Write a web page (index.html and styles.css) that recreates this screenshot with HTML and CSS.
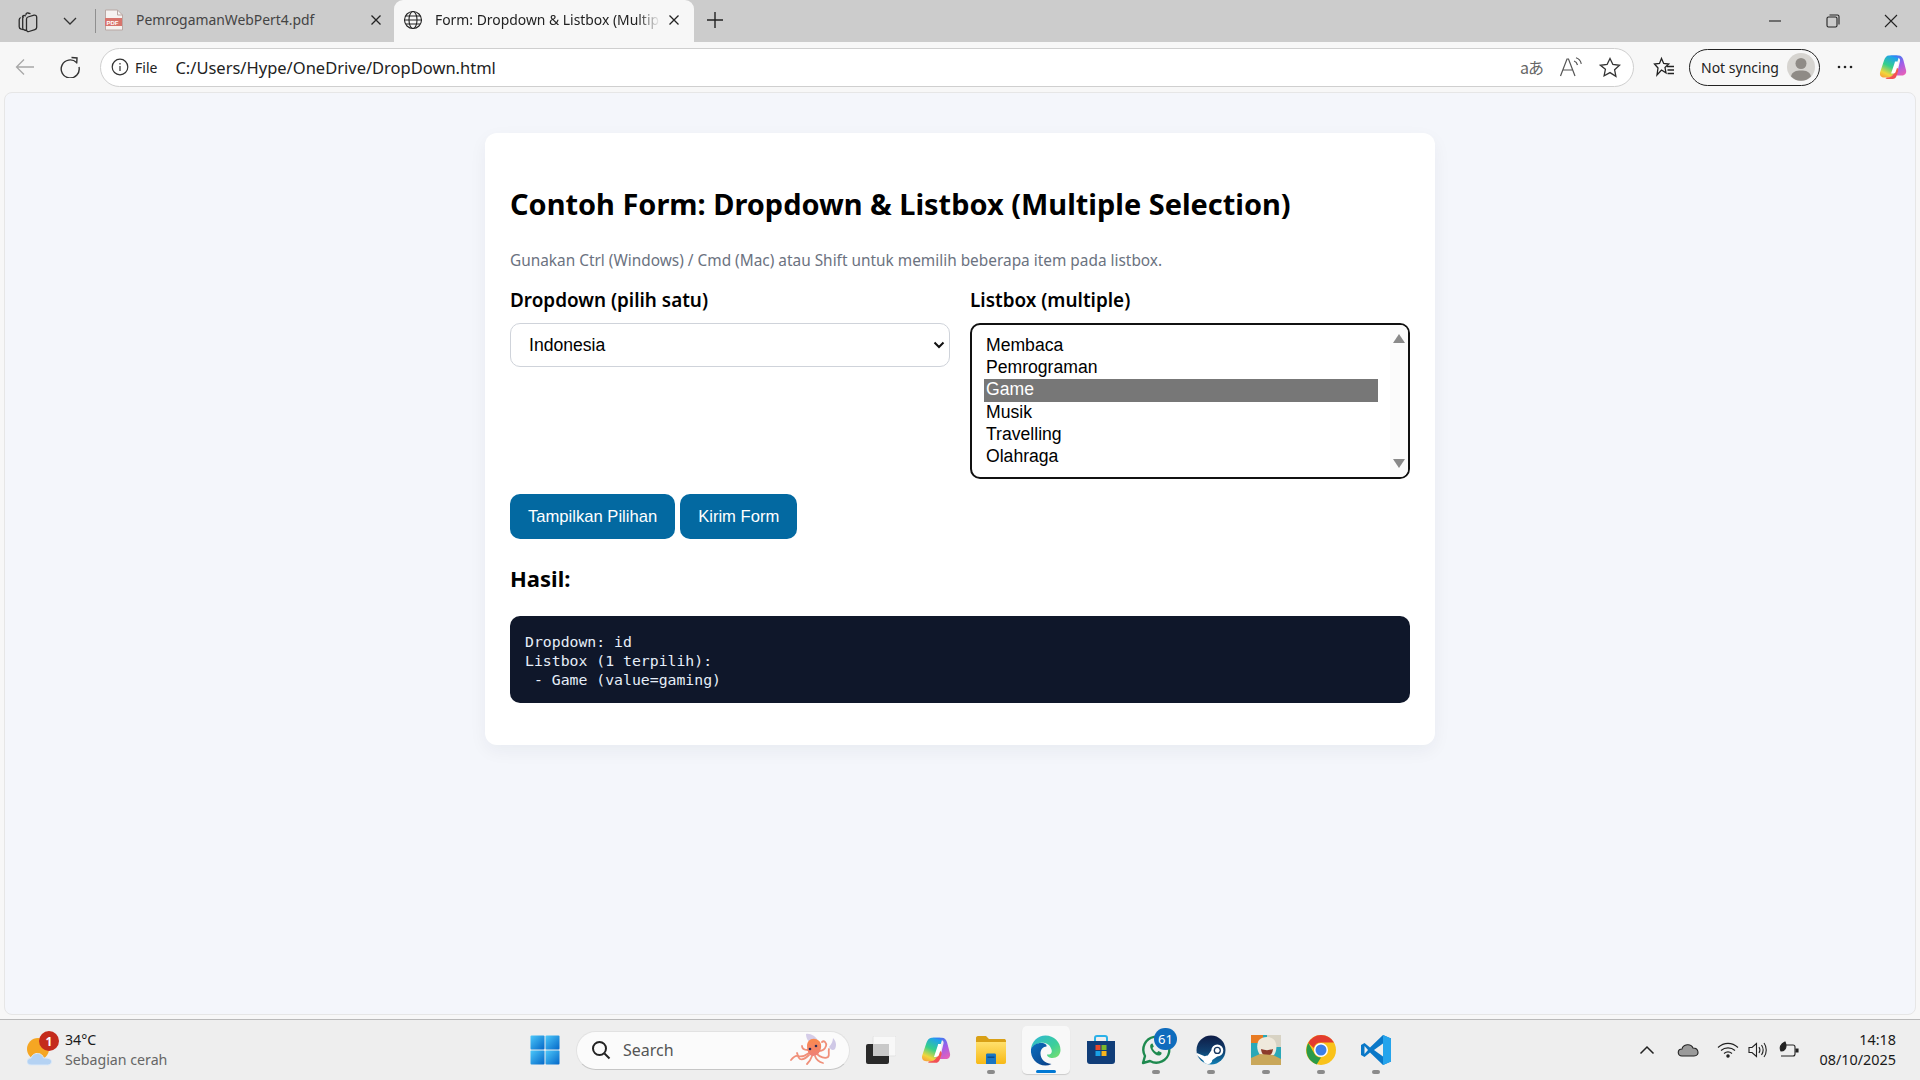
FILE: index.html
```html
<!DOCTYPE html>
<html lang="id">
<head>
<meta charset="utf-8"/>
<title>Form: Dropdown &amp; Listbox (Multiple Selection)</title>
<link rel="stylesheet" href="styles.css">
</head>
<body>
<svg class="defs" width="0" height="0">
    <defs>
        <linearGradient id="copA" x1="0.6" y1="0" x2="0.2" y2="1"><stop offset="0" stop-color="#1f9ff0"/><stop offset=".45" stop-color="#35d08a"/><stop offset=".8" stop-color="#f2d63c"/><stop offset="1" stop-color="#f8a53a"/></linearGradient>
        <linearGradient id="copB" x1="0.3" y1="0" x2="0.8" y2="1"><stop offset="0" stop-color="#2f7ff2"/><stop offset=".5" stop-color="#a05ee8"/><stop offset="1" stop-color="#e860b8"/></linearGradient>
        <linearGradient id="copC" x1="0" y1="0" x2="1" y2="1"><stop offset="0" stop-color="#fb7a3c"/><stop offset="1" stop-color="#ee3f5c"/></linearGradient>
        <linearGradient id="edgeA" x1="0" y1="0" x2="1" y2="1"><stop offset="0" stop-color="#2fb6d8"/><stop offset=".6" stop-color="#3ccf9a"/><stop offset="1" stop-color="#7fe06a"/></linearGradient>
        <linearGradient id="edgeB" x1="0" y1="0" x2="1" y2="1"><stop offset="0" stop-color="#0c6fc0"/><stop offset="1" stop-color="#0b3f86"/></linearGradient>
        <linearGradient id="winA" x1="0" y1="0" x2="1" y2="1"><stop offset="0" stop-color="#4cc8fa"/><stop offset="1" stop-color="#0467c8"/></linearGradient>
        <linearGradient id="steamA" x1="0" y1="0" x2="0" y2="1"><stop offset="0" stop-color="#0f1c46"/><stop offset=".55" stop-color="#10406f"/><stop offset="1" stop-color="#0f7fb4"/></linearGradient>
        <linearGradient id="folderA" x1="0" y1="0" x2="0" y2="1"><stop offset="0" stop-color="#ffe06d"/><stop offset="1" stop-color="#f7b916"/></linearGradient>
        <linearGradient id="octoA" x1="0" y1="0" x2="0" y2="1"><stop offset="0" stop-color="#fb8a4c"/><stop offset="1" stop-color="#ee7f78"/></linearGradient>
        <symbol id="copilot" viewBox="0 0 28 28">
            <path d="M10 2.500h7.500c1.500 0 2.500 1 2 2.500L15 20c-1 3-3.500 4.500-6.500 4.500H5C1.800 24.500.3 22 1.200 19L5 7.500C6 4.500 7.500 2.500 10 2.500z" fill="url(#copA)"/>
            <path d="M10.500 2.500h9c2.500 0 4 1.800 4.800 4.300L27 17c.8 3-1 5.500-4 5.500H17.500L21 8c.5-2-.8-3-2.500-3.500z" fill="url(#copB)"/>
            <path d="M8 24.500c3.500 0 6-1.800 7-5l1.500-4.500c2.200-.6 3.300 1 2.600 3.400L17.500 23c-.6 1.800-2 3-4 3H8.500c-2 0-2.500-1-.5-1.500z" fill="url(#copC)"/>
            <path d="M16 8.500h2.600c.8 2 .4 3.500-.3 5.500l-1.700 5c-.5 1.200-1.300 1.500-3.100 1.500h-1.400l3.500-10.500z" fill="#fff"/>
        </symbol>
    </defs>
</svg>

<div class="tabstrip">
    <div class="strip-tools">
        <svg width="24" height="24" viewBox="0 0 24 24" fill="none" stroke="#2b2b2b" stroke-width="1.300"><path d="M10 6V5.500c0-1 .8-1.700 1.800-1.500l2.700.7"/><path d="M6.500 8.500V8c0-1 .8-1.700 1.800-1.500L10 7"/><path d="M4.700 8.500c-1 .5-1.500 1.200-1.500 2.200v7c0 1.200.7 2 1.800 2.300l2 .6"/><path d="M7.700 7.500c-.7.500-1 1.200-1 2v9.500c0 1 .8 1.800 1.800 2l2 .5"/><path d="M10.500 10c0-1 .6-1.700 1.500-2l6-1.800c1.500-.4 2.700.5 2.700 2v10c0 1.200-.6 2-1.800 2.400l-5.900 1.900c-1.400.4-2.500-.5-2.500-2z"/></svg>
        <svg class="ico-chev" width="16" height="16" viewBox="0 0 16 16" fill="none" stroke="#333" stroke-width="1.300"><path d="M2 5l6 6 6-6"/></svg>
        <span class="strip-sep"></span>
    </div>
    <div class="tab">
        <svg width="20" height="22" viewBox="0 0 20 22"><path d="M1.500 1h12l5 5v15h-17z" fill="#f6f2f0" stroke="#b9a8a4"/><path d="M13.500 1v5h5" fill="none" stroke="#b9a8a4"/><rect x="1" y="9" width="17" height="8" fill="#d8746c"/><text class="pdf-mark" x="2.500" y="15.500">PDF</text></svg>
        <span class="tab-title">PemrogamanWebPert4.pdf</span>
        <svg class="tab-x" width="12" height="12" viewBox="0 0 12 12" stroke="#222" stroke-width="1.300"><path d="M1.500 1.500l9 9M10.500 1.500l-9 9"/></svg>
    </div>
    <div class="tab tab-active">
        <svg width="20" height="20" viewBox="0 0 20 20" fill="none" stroke="#222" stroke-width="1.100"><circle cx="10" cy="10" r="8.500"/><ellipse cx="10" cy="10" rx="4" ry="8.500"/><path d="M1.500 10h17M2.700 6h14.600M2.700 14h14.600"/></svg>
        <span class="tab-title">Form: Dropdown &amp; Listbox (Multiple Selection)</span>
        <svg class="tab-x" width="12" height="12" viewBox="0 0 12 12" stroke="#222" stroke-width="1.300"><path d="M1.500 1.500l9 9M10.500 1.500l-9 9"/></svg>
    </div>
    <svg class="new-tab" width="18" height="18" viewBox="0 0 18 18" stroke="#222" stroke-width="1.400"><path d="M9 1v16M1 9h16"/></svg>
    <div class="win-controls">
        <svg width="14" height="14" viewBox="0 0 14 14" stroke="#222" stroke-width="1.100"><path d="M1 7h12"/></svg>
        <svg width="14" height="14" viewBox="0 0 14 14" fill="none" stroke="#222" stroke-width="1.100"><rect x="1" y="3" width="10" height="10" rx="1.500"/><path d="M3.500 1h8c.9 0 1.500.6 1.500 1.500v8"/></svg>
        <svg width="14" height="14" viewBox="0 0 14 14" stroke="#222" stroke-width="1.100"><path d="M1 1l12 12M13 1L1 13"/></svg>
    </div>
</div>

<div class="toolbar">
    <svg class="tb-back" width="20" height="18" viewBox="0 0 20 18" fill="none" stroke="#a8a8a8" stroke-width="1.300"><path d="M19 9H1.500M9 1.500 1.500 9 9 16.500"/></svg>
    <svg class="tb-reload" width="22" height="22" viewBox="0 0 22 22" fill="none" stroke="#333" stroke-width="1.400"><path d="M17.500 6.500A9 9 0 1 0 20 11"/><path d="M12.500 1.500 18 2l-.3 5.500"/></svg>
    <div class="addr">
        <svg width="18" height="18" viewBox="0 0 18 18" fill="none" stroke="#333" stroke-width="1.200"><circle cx="9" cy="9" r="7.800"/><path d="M9 8v5M9 5v1.400"/></svg>
        <span class="addr-scheme">File</span>
        <span class="addr-url">C:/Users/Hype/OneDrive/DropDown.html</span>
        <span class="addr-tools">
            <span class="translate">aあ</span>
            <svg width="24" height="22" viewBox="0 0 24 22" fill="none" stroke="#555" stroke-width="1.200"><path d="M1.500 20 8 3h1.500L16 20M4 14h10"/><path d="M15 5c2 .6 3 2 3.500 4M17 1.800c3 1 4.600 3 5.300 6"/></svg>
            <svg width="22" height="21" viewBox="0 0 22 21" fill="none" stroke="#333" stroke-width="1.300"><path d="M11 1.500l2.900 6 6.600.8-4.900 4.500 1.300 6.500L11 15.600l-5.900 3.200 1.300-6.500L1.500 8.300l6.600-.8z"/></svg>
        </span>
    </div>
    <svg class="tb-fav" width="22" height="22" viewBox="0 0 22 22" fill="none" stroke="#222" stroke-width="1.300"><path d="M8.500 2.500l2.200 5 5 .5-3.700 3.500 1 5.300-4.500-2.800-4.500 5 1-7L1.500 8l5-.5z"/><path d="M14 10.500h7M14.500 14h6.500M14.500 17.500h6.500"/></svg>
    <div class="sync-pill">
        <span>Not syncing</span>
        <svg width="28" height="28" viewBox="0 0 28 28"><circle cx="14" cy="14" r="14" fill="#d6d4d0"/><circle cx="14" cy="10.500" r="5.500" fill="#8f8b86"/><path d="M4 23.500C5 18.500 9 17.500 14 17.500s9 1 10 6A14 14 0 0 1 4 23.500z" fill="#8f8b86"/></svg>
    </div>
    <svg class="tb-more" width="16" height="4" viewBox="0 0 16 4" fill="#222"><circle cx="2" cy="2" r="1.300"/><circle cx="8" cy="2" r="1.300"/><circle cx="14" cy="2" r="1.300"/></svg>
    <svg class="tb-copilot" width="28" height="28"><use href="#copilot"/></svg>
</div>

<div class="viewport">
    <div class="page">
        <main class="card">
            <h1>Contoh Form: Dropdown &amp; Listbox (Multiple Selection)</h1>
            <p class="hint">Gunakan Ctrl (Windows) / Cmd (Mac) atau Shift untuk memilih beberapa item pada listbox.</p>
            <form class="fields">
                <div class="field">
                    <label for="negara">Dropdown (pilih satu)</label>
                    <select id="negara" class="dropdown">
                        <option value="id">Indonesia</option>
                        <option value="my">Malaysia</option>
                        <option value="sg">Singapura</option>
                    </select>
                </div>
                <div class="field">
                    <label>Listbox (multiple)</label>
                    <div class="listbox" role="listbox">
                        <ul class="options">
                            <li>Membaca</li>
                            <li>Pemrograman</li>
                            <li class="selected">Game</li>
                            <li>Musik</li>
                            <li>Travelling</li>
                            <li>Olahraga</li>
                        </ul>
                        <div class="scroller">
                            <span class="arrow-up"></span>
                            <span class="arrow-down"></span>
                        </div>
                    </div>
                </div>
            </form>
            <div class="actions">
                <button type="button" class="btn">Tampilkan Pilihan</button>
                <button type="button" class="btn">Kirim Form</button>
            </div>
            <h3>Hasil:</h3>
            <pre class="output">Dropdown: id
Listbox (1 terpilih):
 - Game (value=gaming)</pre>
        </main>
    </div>
</div>

<footer class="taskbar">
    <div class="weather">
        <svg width="32" height="38" viewBox="0 0 32 38">
            <circle cx="11" cy="18" r="11" fill="#f5a623"/>
            <path d="M4 34c-3 0-4-2-4-3.500S1.500 27 4 27c1-3 4-5 7.500-4.500 2.500.4 4.500 2 5 4.500 4 0 8 .5 8 3.800 0 2-2 3.200-4 3.200z" fill="#b4d2f3" stroke="#dbe9f8"/>
            <circle cx="22" cy="10" r="10" fill="#c42b1c"/>
            <text class="badge-num" x="22" y="14.500">1</text>
        </svg>
        <div>
            <div class="w-temp">34°C</div>
            <div class="w-desc">Sebagian cerah</div>
        </div>
    </div>

    <div class="task-icons">
        <div class="task-item">
            <svg width="30" height="30" viewBox="0 0 30 30"><g fill="url(#winA)"><rect x="0.500" y="0.500" width="14" height="14" rx="1"/><rect x="15.500" y="0.500" width="14" height="14" rx="1"/><rect x="0.500" y="15.500" width="14" height="14" rx="1"/><rect x="15.500" y="15.500" width="14" height="14" rx="1"/></g></svg>
        </div>
        <div class="search">
            <svg width="20" height="20" viewBox="0 0 20 20" fill="none" stroke="#222" stroke-width="2"><circle cx="8.500" cy="8.500" r="6.500"/><path d="M13.500 13.500l5 5"/></svg>
            <span class="search-text">Search</span>
            <svg class="octopus" width="50" height="34" viewBox="0 0 50 34" fill="none">
                <path d="M17 1c4-1 10 2 12 7l-6 3c-4-2-6-6-6-10z" fill="#d5cde8"/>
                <g stroke="#f0907a" stroke-width="1.800" stroke-linecap="round">
                    <path d="M20 20c-4 3-8 4-11 3-2-.6-4 0-7 4"/>
                    <path d="M20 22c-3 3-7 5-9 4s-2-4-3-6"/>
                    <path d="M23 23c-1 3-3 6-5 8"/>
                    <path d="M26 23c1 3 4 6 8 7"/>
                    <path d="M28 21c3 3 8 5 11 3 2-2 0-5 1-8"/>
                    <path d="M30 18c3 0 6-2 7-5s-2-6-4-4"/>
                    <path d="M19 17c-3 0-6-1-6-4"/>
                </g>
                <path d="M40 14c3-3 4-7 4-9 3 3 4 7 2 11-2 2-4 1-6-2z" fill="#cfc8e6"/>
                <path d="M18 13c0-5 4-8 8-7 4 .6 7 4 6 9-1 5-4 8-8 8s-6-5-6-10z" fill="url(#octoA)"/>
                <circle cx="21" cy="16" r="1.300" fill="#2c2c55"/><circle cx="27" cy="13" r="1.300" fill="#2c2c55"/>
            </svg>
        </div>
        <div class="task-item">
            <svg width="30" height="28" viewBox="0 0 30 28"><rect x="7" y="0" width="23" height="20" rx="1.500" fill="#f8f8f8" stroke="#e2e2e2"/><rect x="0" y="8" width="23" height="20" rx="2" fill="#2a2a2a"/><rect x="7" y="8" width="16" height="12" fill="#c9c9c9"/></svg>
        </div>
        <div class="task-item">
            <svg width="30" height="30"><use href="#copilot"/></svg>
        </div>
        <div class="task-item running">
            <svg width="30" height="28" viewBox="0 0 30 28"><path d="M0 2c0-1 .6-2 2-2h8l3 3h15c1 0 2 .6 2 2v4H0z" fill="#d9a016"/><path d="M0 6h30v20c0 1-.6 2-2 2H2c-1 0-2-.6-2-2z" fill="url(#folderA)"/><path d="M10 19c0-1 .6-1.500 1.500-1.500h7c1 0 1.500.6 1.500 1.500v9H10z" fill="#1975c2"/><rect x="11.500" y="20.500" width="7" height="1.500" fill="#0d4d8a"/></svg>
        </div>
        <div class="task-item active">
            <svg width="31" height="31" viewBox="0 0 31 31">
                <path d="M1 14C2 6 8 .5 15.500.5 24 .5 30.500 7 30.500 15c0 5-3.500 8-8 8-3 0-5.500-1.500-5.500-3.500 4 .5 5.500-2 4.500-5C20 9 15 7 10 8c-4 1-7.500 3-9 6z" fill="url(#edgeA)"/>
                <path d="M1 14c2-4 6-6 10-6 4.500 0 6 2 5.500 3.500-3.500 0-6 3-6 7 0 5 4 10 11 10.500-2 1-4 1.500-6 1.500C7 30.500 0 23 1 14z" fill="url(#edgeB)"/>
            </svg>
            <span class="active-bar"></span>
        </div>
        <div class="task-item">
            <svg width="30" height="30" viewBox="0 0 30 30"><path d="M9 6V3c0-1 .6-2 2-2h8c1 0 2 .6 2 2v3" fill="none" stroke="#2bb1e8" stroke-width="2"/><path d="M1 6h28v20c0 2-1 3-3 3H4c-2 0-3-1-3-3z" fill="#103d78"/><rect x="9.500" y="10" width="5" height="5" fill="#e8492b"/><rect x="15.500" y="10" width="5" height="5" fill="#7cb82a"/><rect x="9.500" y="16" width="5" height="5" fill="#19a0e5"/><rect x="15.500" y="16" width="5" height="5" fill="#f8b51c"/></svg>
        </div>
        <div class="task-item running">
            <svg width="32" height="32" viewBox="0 0 32 32" fill="none"><path d="M3 29l2-7A13 13 0 1 1 10 27z" stroke="#1e8a4f" stroke-width="2.400" stroke-linejoin="round"/><path d="M11 10c-1.500 1.500-1 4 1 7s5 5 7.500 4.500c1.500-.4 2.500-2 2-3l-3-1.500-1.500 1.500c-2-1-3.500-2.500-4.500-4.500l1.300-1.500L12.500 9.500c-.5-.2-1 0-1.500.5z" fill="#1e8a4f"/></svg>
            <span class="count-badge">61</span>
        </div>
        <div class="task-item running">
            <svg width="30" height="30" viewBox="0 0 30 30"><circle cx="15" cy="15" r="14.500" fill="url(#steamA)"/><path d="M.8 18l8 3.300a5 5 0 0 1 3-.9l3.500-5a6 6 0 1 1 6 6l-5 3.600a4.500 4.500 0 0 1-8.800.8L.8 20z" fill="#fff"/><circle cx="21.300" cy="15.400" r="3.600" fill="#14355e"/><circle cx="21.300" cy="15.400" r="2.300" fill="#fff"/></svg>
        </div>
        <div class="task-item running">
            <svg width="30" height="30" viewBox="0 0 30 30"><rect width="30" height="30" fill="#2aa8b8"/><rect width="12" height="8" fill="#e87b23"/><rect x="16" width="14" height="12" fill="#d8d3c4"/><path d="M8 5c4-4 13-4 16 1 2 4 2 10-1 14H9C6 16 5 10 8 5z" fill="#efe9dc"/><path d="M10 14c4 1.500 8 1.500 12 0-.5 5-3 7-6 7s-5.500-2-6-7z" fill="#8c3b2b"/><path d="M0 30v-7l9-4 13 1 8 4v6z" fill="#c9a75a"/></svg>
        </div>
        <div class="task-item running">
            <svg width="30" height="30" viewBox="0 0 30 30"><circle cx="15" cy="15" r="15" fill="#f9c21a"/><path d="M15 0a15 15 0 0 1 13 7.500H15a7.500 7.500 0 0 0-7.200 5.400L2.300 8A15 15 0 0 1 15 0z" fill="#e33c2f"/><path d="M2.300 8l6 10.500A7.500 7.500 0 0 0 15 22.500L10.700 29.400A15 15 0 0 1 2.300 8z" fill="#2a9a48"/><circle cx="15" cy="15" r="7" fill="#fff"/><circle cx="15" cy="15" r="5.500" fill="#3c7fe6"/></svg>
        </div>
        <div class="task-item running">
            <svg width="30" height="30" viewBox="0 0 30 30"><path d="M22 0l8 3.500v23L22 30 9 17.500 3.500 22 0 20v-10l3.500-2L9 12.500z" fill="#0a78c8"/><path d="M22 0l8 3.500v23L22 30z" fill="#25a4ec"/><path d="M22 8.500 13 15l9 6.500z" fill="#eee"/><path d="M3.500 11 7 15l-3.500 4z" fill="#eee"/></svg>
        </div>
    </div>

    <div class="tray">
        <svg width="16" height="10" viewBox="0 0 16 10" fill="none" stroke="#222" stroke-width="1.500"><path d="M1.500 8.500 8 2l6.500 6.500"/></svg>
        <svg class="tray-cloud" width="22" height="14" viewBox="0 0 22 14"><path d="M5 13c-5 0-5-7 0-7 1-5 9-6 11-1 6 0 7 8 1 8z" fill="#9a9a9a" stroke="#222" stroke-width="1.100"/></svg>
        <svg class="tray-wifi" width="22" height="16" viewBox="0 0 22 16" fill="none" stroke="#222" stroke-width="1.100"><path d="M1 5.500c6-5.500 14-5.500 20 0M4 8.500c4-3.500 10-3.500 14 0M7 11.500c2.500-2 5.500-2 8 0"/><circle cx="11" cy="14" r="1.200" fill="#222"/></svg>
        <svg class="tray-vol" width="20" height="16" viewBox="0 0 20 16" fill="none" stroke="#222" stroke-width="1.100"><path d="M1 5.500h3L8.500 1.500v13L4 10.500H1z"/><path d="M11 5c1.200 2 1.200 4 0 6M13.500 3c2 3 2 7 0 10M16 1c3 4 3 10 0 14"/></svg>
        <svg class="tray-batt" width="20" height="18" viewBox="0 0 20 18" fill="none" stroke="#222" stroke-width="1.100"><path d="M6 4h8c1 0 2 .6 2 2v7c0 1-.6 2-2 2H2"/><path d="M16.500 8H19v3h-2.500" fill="#222"/><path d="M6 1C2 3 0 6 2 10c3 0 5-2 5-5 0-2-.5-3-1-4z" fill="#222"/></svg>
        <div class="clock">
            <div>14:18</div>
            <div>08/10/2025</div>
        </div>
    </div>
</footer>
</body>
</html>
```

FILE: styles.css
```css
* {
    box-sizing: border-box;
}
html, body {
    margin: 0;
    height: 100%;
}
body {
    display: flex;
    flex-direction: column;
    height: 1080px;
    overflow: hidden;
    font-family: "Noto Sans", "Open Sans", sans-serif;
    background: #f7f7f7;
}
svg {
    display: block;
    flex: none;
}
.defs {
    position: absolute;
}

/* tab strip */
.tabstrip {
    display: flex;
    align-items: center;
    height: 42px;
    flex: none;
    background: #cccccc;
    padding-left: 16px;
}
.strip-tools {
    display: flex;
    align-items: center;
    width: 87px;
}
.ico-chev {
    margin-left: 22px;
}
.strip-sep {
    width: 1px;
    height: 24px;
    background: #8f8f8f;
    margin-left: 17px;
}
.tab {
    display: flex;
    align-items: center;
    width: 291px;
    height: 42px;
    padding: 0 12px 2px 1px;
    font-size: 13.900px;
    color: #444;
}
.tab .tab-title {
    flex: 1;
    margin: 0 0 2px 12px;
    white-space: nowrap;
    overflow: hidden;
}
.tab-active {
    width: 300px;
    padding: 0 14px 2px 9px;
    background: #f7f7f7;
    border-radius: 9px 9px 0 0;
    color: #222;
}
.tab-active .tab-title {
    margin-right: 8px;
    -webkit-mask-image: linear-gradient(to right, #000 90%, transparent);
    mask-image: linear-gradient(to right, #000 90%, transparent);
}
.pdf-mark {
    font: bold 6px "Liberation Sans", sans-serif;
    fill: #fff;
}
.new-tab {
    margin: 0 0 2px 12px;
}
.win-controls {
    display: flex;
    align-items: center;
    gap: 44px;
    margin-left: auto;
    margin-right: 22px;
}

/* toolbar */
.toolbar {
    display: flex;
    align-items: center;
    height: 50px;
    flex: none;
    padding-left: 15px;
}
.tb-reload {
    margin-left: 24px;
}
.addr {
    display: flex;
    align-items: center;
    width: 1534px;
    height: 39px;
    margin-left: 19px;
    padding-left: 10px;
    background: #fff;
    border: 1px solid #cfcfcf;
    border-radius: 20px;
    font-size: 16.500px;
    color: #222;
}
.addr-scheme {
    font-size: 14px;
    margin-left: 6px;
}
.addr-url {
    margin-left: 18px;
}
.addr-tools {
    display: flex;
    align-items: center;
    gap: 16px;
    margin-left: auto;
    margin-right: 12px;
}
.translate {
    font: 16px "Noto Sans CJK JP", "Noto Sans", sans-serif;
    letter-spacing: -1px;
    color: #666;
}
.tb-fav {
    margin-left: 19px;
}
.sync-pill {
    display: flex;
    align-items: center;
    justify-content: space-between;
    width: 131px;
    height: 37px;
    margin-left: 14px;
    padding: 0 4px 0 11px;
    border: 1.600px solid #222;
    border-radius: 19px;
    font-size: 14px;
    color: #222;
}
.tb-more {
    margin-left: 17px;
}
.tb-copilot {
    margin-left: 26px;
}

/* page */
.viewport {
    flex: 1;
    padding: 0 4px 4px;
    border-bottom: 1px solid #b9b9b9;
}
.page {
    height: 100%;
    background: #f4f6fb;
    border: 1px solid #e6e6e6;
    border-radius: 8px;
    padding-top: 40px;
}
.card {
    width: 950px;
    margin: 0 auto;
    padding: 25px;
    background: #fff;
    border-radius: 12px;
    box-shadow: 0 6px 18px rgba(20, 30, 60, 0.05);
}
h1 {
    margin: 26px 0 0;
    font-size: 28.950px;
    line-height: 39px;
    font-weight: 700;
    color: #000;
}
.hint {
    margin: 28px 0 0;
    font-size: 15.400px;
    line-height: 20px;
    color: #6b7280;
}
.fields {
    display: grid;
    grid-template-columns: 440px 440px;
    gap: 20px;
    margin-top: 17px;
}
.field label {
    display: block;
    font-size: 18.900px;
    line-height: 24px;
    font-weight: 600;
    color: #000;
    margin-bottom: 11px;
}
.dropdown {
    display: block;
    width: 100%;
    height: 44px;
    padding: 0 10px 0 18px;
    font: 17.600px "Liberation Sans", Arial, sans-serif;
    color: #000;
    -webkit-appearance: none;
    appearance: none;
    background: #fff url("data:image/svg+xml,%3Csvg xmlns='http://www.w3.org/2000/svg' width='12' height='8' viewBox='0 0 12 8'%3E%3Cpath d='M1.500 1.500 6 6l4.500-4.500' fill='none' stroke='%23111' stroke-width='2'/%3E%3C/svg%3E") no-repeat right 4px center;
    border: 1px solid #cfd3da;
    border-radius: 10px;
}
.listbox {
    display: flex;
    height: 156px;
    border: 2px solid #111;
    border-radius: 10px;
    overflow: hidden;
    background: #fff;
}
.options {
    flex: 1;
    list-style: none;
    margin: 0;
    padding: 10px 12px 0 12px;
    font: 17.600px/20.600px "Liberation Sans", Arial, sans-serif;
    color: #000;
}
.options li {
    padding-left: 2px;
    height: 22.200px;
}
.options .selected {
    background: #777777;
    color: #fff;
}
.scroller {
    display: flex;
    flex-direction: column;
    justify-content: space-between;
    align-items: center;
    width: 18px;
    padding: 9px 0;
    background: #fbfbfb;
}
.arrow-up, .arrow-down {
    width: 0;
    height: 0;
    border-left: 6.500px solid transparent;
    border-right: 6.500px solid transparent;
}
.arrow-up {
    border-bottom: 9px solid #8a8a8a;
}
.arrow-down {
    border-top: 9px solid #8a8a8a;
}
.actions {
    display: flex;
    gap: 5px;
    margin-top: 15px;
}
.btn {
    height: 45px;
    padding: 0 18px;
    font: 16.600px "Liberation Sans", Arial, sans-serif;
    color: #fff;
    background: #0369a1;
    border: 0;
    border-radius: 10px;
}
h3 {
    margin: 25px 0 0;
    font-size: 22px;
    line-height: 28px;
    font-weight: 700;
    color: #000;
}
.output {
    height: 87px;
    margin: 24px 0 17px;
    padding: 16px 15px 0;
    background: #0f172a;
    color: #e6eef8;
    border-radius: 10px;
    font: 14.800px/19px "DejaVu Sans Mono", "Liberation Mono", monospace;
}

/* taskbar */
.taskbar {
    display: grid;
    grid-template-columns: 1fr auto 1fr;
    align-items: center;
    height: 60px;
    flex: none;
    background: #eeeeee;
}
.weather {
    display: flex;
    align-items: center;
    gap: 6px;
    padding-left: 27px;
    font-size: 14.200px;
    line-height: 20px;
    color: #1a1a1a;
}
.w-desc {
    color: #666;
}
.badge-num {
    font: bold 12px "Noto Sans", sans-serif;
    fill: #fff;
    text-anchor: middle;
}
.task-icons {
    display: flex;
    align-items: center;
    height: 60px;
}
.task-item {
    position: relative;
    display: flex;
    align-items: center;
    justify-content: center;
    width: 55px;
    height: 60px;
}
.task-item.running::after {
    content: "";
    position: absolute;
    left: 24px;
    bottom: 6px;
    width: 8px;
    height: 4px;
    border-radius: 2px;
    background: #8a8a8a;
}
.task-item.active::before {
    content: "";
    position: absolute;
    left: 4px;
    top: 6px;
    width: 48px;
    height: 48px;
    background: #f8f8f8;
    border-radius: 5px;
    box-shadow: 0 1px 1px rgba(0, 0, 0, 0.15);
}
.task-item.active svg {
    position: relative;
}
.active-bar {
    position: absolute;
    left: 18px;
    bottom: 7px;
    width: 20px;
    height: 3px;
    border-radius: 2px;
    background: #0078d4;
}
.count-badge {
    position: absolute;
    left: 26px;
    top: 8px;
    width: 23px;
    height: 22px;
    border-radius: 11px;
    background: #0f6cbd;
    color: #fff;
    font-size: 13px;
    line-height: 22px;
    text-align: center;
}
.search {
    display: flex;
    align-items: center;
    width: 274px;
    height: 39px;
    margin: 0 3px 0 4px;
    padding-left: 14px;
    background: #fbfbfb;
    border: 1px solid #e2e2e2;
    border-bottom-color: #c6c6c6;
    border-radius: 20px;
}
.search-text {
    margin-left: 12px;
    font-size: 16px;
    color: #555;
}
.octopus {
    margin-left: auto;
    margin-right: 10px;
}
.tray {
    display: flex;
    align-items: center;
    justify-content: flex-end;
    padding-right: 24px;
}
.tray-cloud {
    margin-left: 22px;
}
.tray-wifi {
    margin-left: 18px;
}
.tray-vol {
    margin-left: 9px;
}
.tray-batt {
    margin-left: 11px;
}
.clock {
    margin-left: 20px;
    text-align: right;
    font-size: 14.400px;
    line-height: 20px;
    color: #1a1a1a;
}
```
